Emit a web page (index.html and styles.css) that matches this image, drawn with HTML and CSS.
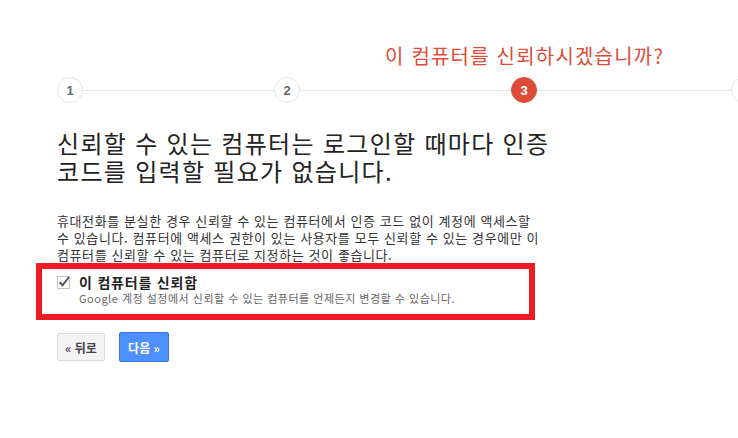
FILE: index.html
```html
<!DOCTYPE html>
<html lang="ko">
<head>
  <meta charset="UTF-8" />
  <title>2단계 인증</title>
  <link rel="stylesheet" href="styles.css">
</head>
<body>
  <div class="page">
    <div class="step-title">이 컴퓨터를 신뢰하시겠습니까?</div>

    <div class="stepper">
      <span class="step">1</span>
      <span class="step-line line-a"></span>
      <span class="step">2</span>
      <span class="step-line line-b"></span>
      <span class="step active">3</span>
      <span class="step-line line-c"></span>
      <span class="step">4</span>
    </div>

    <h1 class="headline">신뢰할 수 있는 컴퓨터는 로그인할 때마다 인증 코드를 입력할 필요가 없습니다.</h1>

    <p class="desc">휴대전화를 분실한 경우 신뢰할 수 있는 컴퓨터에서 인증 코드 없이 계정에 액세스할 수 있습니다. 컴퓨터에 액세스 권한이 있는 사용자를 모두 신뢰할 수 있는 경우에만 이 컴퓨터를 신뢰할 수 있는 컴퓨터로 지정하는 것이 좋습니다.</p>

    <div class="highlight">
      <label class="trust">
        <svg class="check" width="15" height="15" viewBox="0 0 15 15">
          <rect x="0.5" y="2.5" width="12" height="12" fill="#fff" stroke="#c4c4c4"/>
          <path d="M2.5 8.2 L5.6 11.3 L12 3" fill="none" stroke="#555" stroke-width="2"/>
        </svg>
        <span class="trust-text">
          <span class="trust-label">이 컴퓨터를 신뢰함</span>
          <span class="trust-note">Google 계정 설정에서 신뢰할 수 있는 컴퓨터를 언제든지 변경할 수 있습니다.</span>
        </span>
      </label>
    </div>

    <div class="actions">
      <button class="btn btn-back">« 뒤로</button>
      <button class="btn btn-next">다음 »</button>
    </div>
  </div>
</body>
</html>
```

FILE: styles.css
```css
body {
  margin: 0;
  font-family: "Noto Sans CJK KR", "Noto Sans", sans-serif;
  background: #fff;
  color: #222;
  overflow: hidden;
  word-break: keep-all;
}

.page {
  padding: 44px 0 0 57px;
  width: 700px;
}

.step-title {
  padding-left: 328px;
  font-size: 20px;
  line-height: 24px;
  letter-spacing: 1.2px;
  color: #dd4b39;
  white-space: nowrap;
}

.stepper {
  display: flex;
  align-items: center;
  margin-top: 9px;
  height: 26px;
}

.step {
  flex: none;
  width: 26px;
  height: 26px;
  box-sizing: border-box;
  border: 1px solid #e5e5e5;
  border-radius: 50%;
  display: flex;
  align-items: center;
  justify-content: center;
  font-family: "Liberation Sans", Arial, sans-serif;
  font-size: 13px;
  font-weight: bold;
  color: #666;
  background: #fff;
}

.step.active {
  background: #dd4b39;
  border-color: #dd4b39;
  color: #fff;
}

.step-line {
  flex: none;
  height: 1px;
  background: #e5e5e5;
}

.line-a { width: 191px; }
.line-b { width: 211px; }
.line-c { width: 194px; }

.headline {
  margin: 26px 0 0;
  width: 505px;
  font-size: 24px;
  font-weight: normal;
  line-height: 27.5px;
  letter-spacing: 1.3px;
  color: #222;
}

.desc {
  margin: 28px 0 0;
  width: 490px;
  font-size: 13px;
  line-height: 17px;
  letter-spacing: 0.6px;
  color: #333;
}

.highlight {
  margin-left: -21px;
  width: 487px;
  height: 45px;
  border: 6px solid #ed1c24;
}

.trust {
  display: flex;
  align-items: flex-start;
  gap: 7px;
  padding: 4px 0 0 15px;
}

.check {
  flex: none;
  margin-top: 1px;
}

.trust-text {
  display: flex;
  flex-direction: column;
}

.trust-label {
  font-size: 14px;
  line-height: 18px;
  font-weight: bold;
  letter-spacing: 0.8px;
  color: #222;
}

.trust-note {
  font-size: 11px;
  line-height: 14px;
  letter-spacing: 0.5px;
  color: #666;
}

.actions {
  display: flex;
  align-items: center;
  gap: 14px;
  margin-top: 12px;
}

.btn {
  font-family: "Noto Sans CJK KR", sans-serif;
  font-size: 12px;
  font-weight: bold;
  border-radius: 2px;
  padding: 0;
  cursor: pointer;
}

.btn-back {
  width: 48px;
  height: 28px;
  background: #f3f3f3;
  border: 1px solid #dcdcdc;
  color: #444;
}

.btn-next {
  width: 50px;
  height: 30px;
  background: #4d90fe;
  border: 1px solid #3079ed;
  color: #fff;
}
```
